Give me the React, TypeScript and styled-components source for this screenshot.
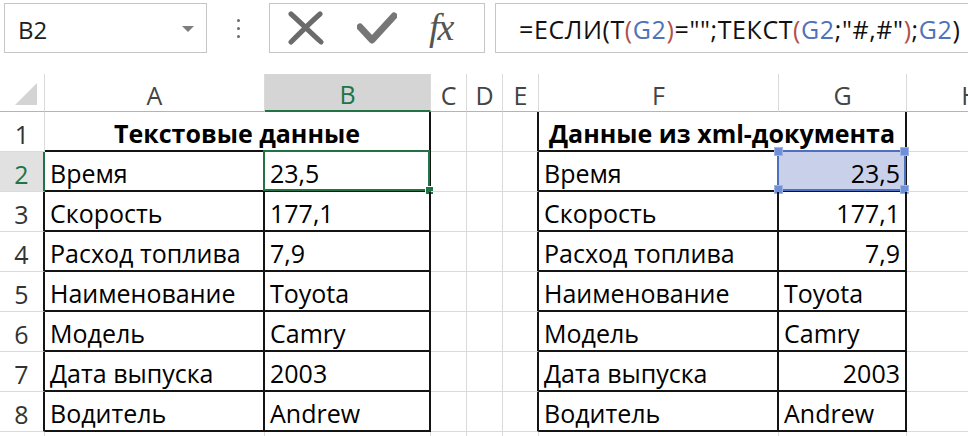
import React from "react";
import styled, { createGlobalStyle } from "styled-components";

type Edge = "grid" | "dark" | "head" | "green";

const lines: Record<Edge, string> = {
  grid: "1px solid #dadada",
  head: "1px solid #b4b4b4",
  dark: "2px solid #141414",
  green: "2px solid #217346",
};

const GlobalStyle = createGlobalStyle`
  html, body {
    margin: 0;
    padding: 0;
    background: #fff;
  }
  body {
    font-family: "Open Sans", "Noto Sans", Arial, sans-serif;
  }
`;

const Page = styled.div`
  width: 968px;
  height: 436px;
  overflow: hidden;
  background: #fff;
`;

/* ---------- formula bar ---------- */

const Toolbar = styled.div`
  display: flex;
  align-items: stretch;
  height: 50px;
  padding-top: 3px;
  margin-bottom: 21px;
`;

const NameBox = styled.div`
  box-sizing: border-box;
  width: 203px;
  margin-left: 4px;
  border: 1px solid #c6c6c6;
  display: flex;
  align-items: center;
  justify-content: space-between;
  padding: 2px 12px 0 13px;
  font-size: 24px;
  color: #1d1d1d;
`;

const Dots = styled.div`
  width: 62px;
  display: flex;
  flex-direction: column;
  align-items: center;
  justify-content: center;
  gap: 5px;

  span {
    width: 3px;
    height: 3px;
    border-radius: 50%;
    background: #6a6a6a;
  }
`;

const IconBox = styled.div`
  box-sizing: border-box;
  width: 216px;
  border: 1px solid #c6c6c6;
  display: flex;
  align-items: center;
  padding-left: 17px;
  gap: 32px;
`;

const Fx = styled.span`
  font-family: "Liberation Serif", "DejaVu Serif", serif;
  font-style: italic;
  font-size: 38px;
  color: #555;
  line-height: 1;
  letter-spacing: -2px;
  padding-bottom: 2px;
`;

const FormulaBox = styled.div`
  box-sizing: border-box;
  flex: 1;
  margin-left: 10px;
  margin-right: -20px;
  border: 1px solid #c6c6c6;
  display: flex;
  align-items: center;
  padding: 2px 0 0 23px;
  font-size: 25px;
  letter-spacing: 0.6px;
  color: #111;
  white-space: nowrap;
`;

const Ref = styled.span`
  color: #4f72b8;
`;

const Paren = styled.span`
  color: #b0514c;
`;

/* ---------- sheet ---------- */

const Sheet = styled.div`
  display: grid;
  grid-template-columns: 45px 220px 166px 36px 36px 36px 240px 128px 128px;
  grid-template-rows: 38px;
  grid-auto-rows: 40px;
  font-size: 25px;
`;

const Corner = styled.div`
  box-sizing: border-box;
  border-right: ${lines.grid};
  border-bottom: ${lines.head};
  display: flex;
  align-items: flex-end;
  justify-content: flex-end;
  padding: 0 7px 6px 0;
`;

const ColHead = styled.div<{ $active?: boolean }>`
  box-sizing: border-box;
  border-right: ${lines.grid};
  border-bottom: ${(p) => (p.$active ? lines.green : lines.head)};
  background: ${(p) => (p.$active ? "#d5d5d5" : "#fff")};
  color: ${(p) => (p.$active ? "#217346" : "#444")};
  display: flex;
  align-items: center;
  justify-content: center;
  padding-top: 4px;
  overflow: hidden;
`;

const RowHead = styled.div<{ $r: Edge; $active?: boolean }>`
  box-sizing: border-box;
  border-right: ${(p) => lines[p.$r]};
  border-bottom: ${lines.grid};
  background: ${(p) => (p.$active ? "#e1e1e1" : "#fff")};
  color: ${(p) => (p.$active ? "#217346" : "#333")};
  display: flex;
  align-items: flex-end;
  justify-content: center;
  padding-bottom: 4px;
  line-height: 1;
`;

const Cell = styled.div<{
  $r?: Edge;
  $b?: Edge;
  $align?: "left" | "right" | "center";
  $bold?: boolean;
  $span?: number;
  $fill?: string;
}>`
  position: relative;
  box-sizing: border-box;
  grid-column: span ${(p) => p.$span ?? 1};
  border-right: ${(p) => lines[p.$r ?? "grid"]};
  border-bottom: ${(p) => lines[p.$b ?? "grid"]};
  background: ${(p) => p.$fill ?? "transparent"};
  display: flex;
  align-items: flex-end;
  justify-content: ${(p) =>
    p.$align === "right" ? "flex-end" : p.$align === "center" ? "center" : "flex-start"};
  padding: 0 5px 4px 5px;
  font-weight: ${(p) => (p.$bold ? 700 : 400)};
  color: #000;
  line-height: 1;
  white-space: nowrap;
`;

const ActiveFrame = styled.div`
  position: absolute;
  top: -2px;
  left: -2px;
  right: -1px;
  bottom: -1px;
  border: 2px solid #217346;
  pointer-events: none;
`;

const FillHandle = styled.div`
  position: absolute;
  right: -5px;
  bottom: -5px;
  width: 7px;
  height: 7px;
  background: #217346;
  outline: 1px solid #fff;
`;

const RefFrame = styled.div`
  position: absolute;
  top: -2px;
  left: -2px;
  right: -1px;
  bottom: -1px;
  border: 2px solid #4f6fbf;
  pointer-events: none;
`;

const RefHandle = styled.div<{ $v: "top" | "bottom"; $h: "left" | "right" }>`
  position: absolute;
  ${(p) => p.$v}: -5px;
  ${(p) => p.$h}: -5px;
  width: 7px;
  height: 7px;
  background: #6f8fd6;
  border: 1px solid #9fb4e6;
`;

const columns = ["A", "B", "C", "D", "E", "F", "G", "H"];

const rows: [string, string, boolean][] = [
  ["Время", "23,5", true],
  ["Скорость", "177,1", true],
  ["Расход топлива", "7,9", true],
  ["Наименование", "Toyota", false],
  ["Модель", "Camry", false],
  ["Дата выпуска", "2003", true],
  ["Водитель", "Andrew", false],
];

function CrossIcon() {
  return (
    <svg width="38" height="34" viewBox="0 0 38 34">
      <path
        d="M4 3 C 12 10, 24 22, 34 31 M33 3 C 25 10, 14 21, 4 31"
        fill="none"
        stroke="#6b6b6b"
        strokeWidth="5"
        strokeLinecap="round"
      />
    </svg>
  );
}

function CheckIcon() {
  return (
    <svg width="40" height="32" viewBox="0 0 40 32">
      <path
        d="M3 15 L15 28 L37 4"
        fill="none"
        stroke="#767676"
        strokeWidth="7"
        strokeLinecap="round"
        strokeLinejoin="round"
      />
    </svg>
  );
}

function DropArrow() {
  return (
    <svg width="12" height="8" viewBox="0 0 12 8">
      <path d="M0 1 L12 1 L6 7 Z" fill="#7d7d7d" />
    </svg>
  );
}

function SelectAll() {
  return (
    <svg width="22" height="22" viewBox="0 0 22 22">
      <path d="M22 0 L22 22 L0 22 Z" fill="#d4d4d4" />
    </svg>
  );
}

export default function App() {
  return (
    <Page>
      <GlobalStyle />
      <Toolbar>
        <NameBox>
          B2
          <DropArrow />
        </NameBox>
        <Dots>
          <span />
          <span />
          <span />
        </Dots>
        <IconBox>
          <CrossIcon />
          <CheckIcon />
          <Fx>fx</Fx>
        </IconBox>
        <FormulaBox>
          =ЕСЛИ(Т<Paren>(</Paren>
          <Ref>G2</Ref>
          <Paren>)</Paren>="";ТЕКСТ<Paren>(</Paren>
          <Ref>G2</Ref>;"#,#"<Paren>)</Paren>;<Ref>G2</Ref>)
        </FormulaBox>
      </Toolbar>

      <Sheet>
        <Corner>
          <SelectAll />
        </Corner>
        {columns.map((c) => (
          <ColHead key={c} $active={c === "B"}>
            {c}
          </ColHead>
        ))}

        {/* row 1 */}
        <RowHead $r="grid">1</RowHead>
        <Cell $span={2} $r="dark" $b="dark" $align="center" $bold>
          Текстовые данные
        </Cell>
        <Cell />
        <Cell />
        <Cell $r="dark" />
        <Cell $span={2} $r="dark" $b="dark" $align="center" $bold>
          Данные из xml-документа
        </Cell>
        <Cell />

        {rows.map(([label, value, numeric], i) => {
          const n = i + 2;
          const first = n === 2;
          return (
            <React.Fragment key={n}>
              <RowHead $r={first ? "green" : "dark"} $active={first}>
                {n}
              </RowHead>
              <Cell $r="dark" $b="dark">
                {label}
              </Cell>
              <Cell $r="dark" $b="dark">
                {value}
                {first && (
                  <ActiveFrame>
                    <FillHandle />
                  </ActiveFrame>
                )}
              </Cell>
              <Cell />
              <Cell />
              <Cell $r="dark" />
              <Cell $r="dark" $b="dark">
                {label}
              </Cell>
              <Cell
                $r="dark"
                $b="dark"
                $align={numeric ? "right" : "left"}
                $fill={first ? "#c8d0ea" : undefined}
              >
                {value}
                {first && (
                  <RefFrame>
                    <RefHandle $v="top" $h="left" />
                    <RefHandle $v="top" $h="right" />
                    <RefHandle $v="bottom" $h="left" />
                    <RefHandle $v="bottom" $h="right" />
                  </RefFrame>
                )}
              </Cell>
              <Cell />
            </React.Fragment>
          );
        })}

        {/* row 9, only its top edge is in view */}
        <RowHead $r="grid" />
        {columns.map((c) => (
          <Cell key={c} />
        ))}
      </Sheet>
    </Page>
  );
}
